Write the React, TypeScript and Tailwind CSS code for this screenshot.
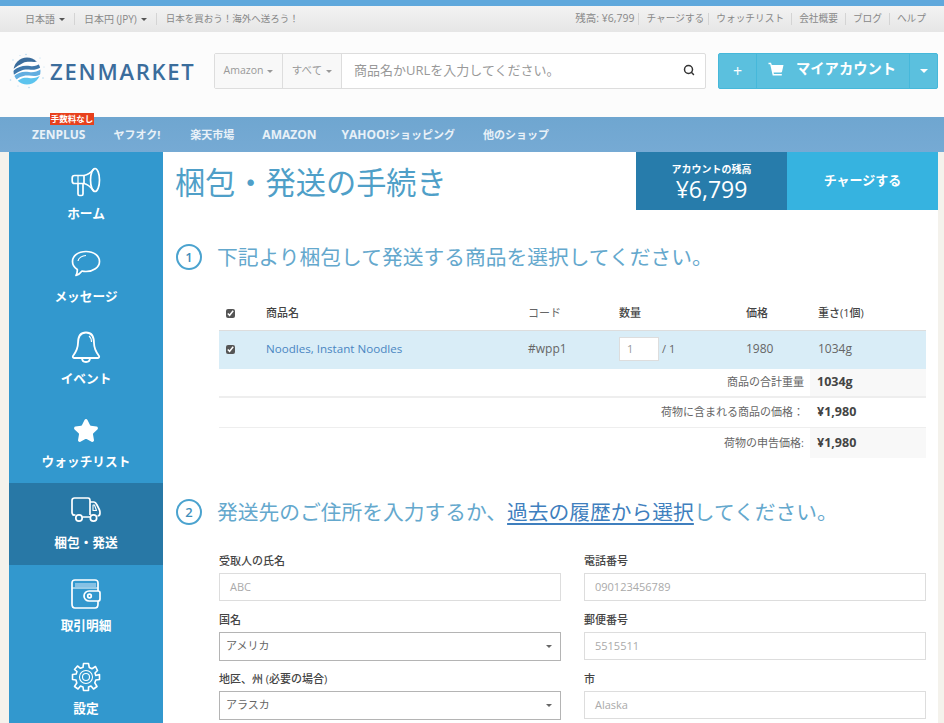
import React from 'react';
import { Search, Star } from 'lucide-react';

const FONT = "font-['Open_Sans','Noto_Sans_CJK_JP',sans-serif]";

const Caret = ({ className = '' }: { className?: string }) => (
  <span className={`inline-block w-0 h-0 border-x-[3px] border-x-transparent border-t-[3.5px] border-t-current ${className}`} />
);

const Logo = () => (
  <svg width="36" height="36" viewBox="0 0 36 36" className="shrink-0">
    <defs>
      <clipPath id="globe"><circle cx="18" cy="18" r="13.5" /></clipPath>
    </defs>
    <g clipPath="url(#globe)">
      <rect x="0" y="0" width="36" height="36" fill="#ffffff" />
      <path d="M2 4 H34 V7 C26 11 20 7 14 10 C10 12 7 14 3 17Z" fill="#3b6d9c" />
      <path d="M3 19 C9 13 15 12 21 13 C25 14 29 12 34 9 V13 C28 17 24 17 20 16.5 C14 16 10 18 3 23Z" fill="#3f78ab" />
      <path d="M3 25 C9 19 14 18 20 19 C25 20 29 18 34 15 V20 C28 24 24 23 20 22.5 C14 22 10 24 4 29Z" fill="#62aee0" />
      <path d="M5 31 C11 25 15 24 20 25 C25 26 29 24 34 21 V34 H5Z" fill="#5cc4ee" />
    </g>
    <g fill="#b4d8ef">
      <circle cx="1.5" cy="27" r="0.8" /><circle cx="4" cy="7" r="0.7" /><circle cx="34" cy="25" r="0.8" />
      <circle cx="17" cy="1.5" r="0.8" /><circle cx="20" cy="34.5" r="0.8" /><circle cx="31" cy="5" r="0.6" />
      <circle cx="11" cy="2.5" r="0.5" /><circle cx="9" cy="33" r="0.6" /><circle cx="35" cy="14" r="0.5" />
    </g>
  </svg>
);

const IconHome = () => (
  <svg width="30" height="30" viewBox="0 0 30 30" fill="none" stroke="white" strokeWidth="1.7" strokeLinejoin="round">
    <path d="M13 8.5 H3.5 C2 8.5 1.2 9.5 1.2 11 V14 C1.2 15.5 2 16.5 3.5 16.5 H13" />
    <path d="M13 8.5 C17 8 20.5 5 23 2 M13 16.5 C17 17 20.5 21 23 24" />
    <ellipse cx="24" cy="13" rx="4.5" ry="11.5" />
    <path d="M13 8.5 V17" />
    <path d="M7 16.5 V27 C7 28 7.7 28.5 8.5 28.5 H10.5 C11.5 28.5 12 28 12 27 V16.5" />
    <path d="M7 8.5 V16.5" strokeWidth="1.2" />
  </svg>
);

const IconMessage = () => (
  <svg width="30" height="28" viewBox="0 0 30 28" fill="none" stroke="white" strokeWidth="1.7" strokeLinejoin="round">
    <path d="M15 1.5 C23 1.5 28.5 6 28.5 11.5 C28.5 17.5 22 21.5 15 21.5 C13.5 21.5 12 21.3 11 21 C9.5 23 7.5 25 5 25.5 C6 23.5 6.5 21.5 6.3 19.5 C3 17.5 1.5 14.7 1.5 11.5 C1.5 6 7 1.5 15 1.5Z" />
    <path d="M7 11 C7.5 8 11 5.5 15 5.5" strokeWidth="1.2" />
  </svg>
);

const IconBell = () => (
  <svg width="30" height="32" viewBox="0 0 30 32" fill="none" stroke="white" strokeWidth="1.8" strokeLinejoin="round">
    <path d="M15 1.5 C9 1.5 7 6.5 7 12 C7 18 5 21 2 25 C1.5 26 2 27 3 27 H27 C28 27 28.5 26 28 25 C25 21 23 18 23 12 C23 6.5 21 1.5 15 1.5Z" />
    <path d="M11 27 C11 30 13 31 15 31 C17 31 19 30 19 27" />
    <path d="M18 5 C20 6.5 20.5 9 20.5 11" strokeWidth="1.1" />
  </svg>
);

const IconTruck = () => (
  <svg width="30" height="26" viewBox="0 0 30 26" fill="none" stroke="white" strokeWidth="1.7" strokeLinejoin="round">
    <path d="M3.5 18 C2 18 1 17 1 15.5 V3.5 C1 2 2 1 3.5 1 H17 C18.5 1 19 2 19 3.5 V18" />
    <path d="M19 5 H23 C24 5 25 6 26 8 L28.5 13 C29 14 29 15 29 16 C29 18 28 19 26.5 19" />
    <path d="M22 8 H23.5 L25.5 13.5 H22Z" strokeWidth="1.1" />
    <circle cx="8" cy="21" r="3.2" />
    <circle cx="22.5" cy="21" r="3.2" />
    <path d="M1.5 18 H4.5 M11.5 20 H19" />
  </svg>
);

const IconWallet = () => (
  <svg width="30" height="30" viewBox="0 0 30 30" fill="none" stroke="white" strokeWidth="1.7" strokeLinejoin="round">
    <path d="M27 12 V4 C27 2 26 1 24 1 H4 C2 1 1 2 1 4 V25 C1 27 2 29 4 29 H24 C26 29 27 27 27 25 V22" />
    <rect x="4" y="4" width="21" height="4" fill="#a9d3ee" stroke="none" opacity="0.7" />
    <path d="M1 9 H27" strokeWidth="1" />
    <path d="M18 12 H27 C28.5 12 29 13 29 14 V20 C29 21 28.5 22 27 22 H18 C15.5 22 13 20 13 17 C13 14 15.5 12 18 12Z" />
    <circle cx="18.5" cy="17" r="1.8" />
  </svg>
);

const IconGear = () => (
  <svg width="30" height="30" viewBox="0 0 30 30" fill="none" stroke="white" strokeWidth="1.6" strokeLinejoin="round">
    <path d="M12.5 1.5 H17.5 L18.3 5.5 L21 6.7 L24.5 4.5 L26.5 8.5 L24 11 L24.8 13.5 L28.5 12.5 V17.5 L24.8 18 L23.8 20.8 L26 24.5 L22.5 27 L20 24 L17.5 25 L17.5 28.5 H12.5 L12 25 L9.5 24 L7 27 L3.5 24.5 L5.8 21 L5 18 L1.5 17.5 V12.5 L5.2 12 L6 9.5 L3.5 7.5 L6.5 4 L9.5 6.3 L12 5.3Z" />
    <circle cx="15" cy="15" r="6.5" strokeWidth="1.1" />
    <circle cx="15" cy="15" r="3.5" strokeWidth="1.1" />
  </svg>
);

const IconCart = () => (
  <svg width="16" height="16" viewBox="0 0 16 16" fill="white">
    <path d="M0.5 0.8 H3 L3.8 3 H15.5 L14 9.8 C13.9 10.3 13.5 10.6 13 10.6 H5.6 L5.9 12 H13.8 V13.4 H4.7 L2.2 2.2 H0.5Z" />
  </svg>
);

const sideItems = [
  { label: 'ホーム', icon: <IconHome />, pos: '' },
  { label: 'メッセージ', icon: <IconMessage />, pos: '' },
  { label: 'イベント', icon: <IconBell />, pos: '' },
  { label: 'ウォッチリスト', icon: <Star size={26} fill="white" stroke="white" />, pos: 'pt-[3px]' },
  { label: '梱包・発送', icon: <IconTruck />, active: true, pos: '-mt-[2px]' },
  { label: '取引明細', icon: <IconWallet />, pos: '-mt-[1px]' },
  { label: '設定', icon: <IconGear />, pos: '-mt-[1px]' },
];

const Sep = () => <span className="h-[12px] w-px bg-[#d4d4d4]" />;

const TopBar = () => (
  <div className="h-[26px] flex items-center justify-between pl-[25px] pr-[18px] bg-gradient-to-b from-[#f3f3f3] to-[#e6e6e6] text-[#888] text-[10px]">
    <div className="flex items-center gap-[9px]">
      <span className="flex items-center gap-[4px]">日本語 <Caret className="text-[#555]" /></span>
      <Sep />
      <span className="flex items-center gap-[4px]">日本円 (JPY) <Caret className="text-[#555]" /></span>
      <Sep />
      <span className="text-[9.5px]">日本を買おう！海外へ送ろう！</span>
    </div>
    <div className="flex items-center gap-[7px] text-[9.7px]">
      <span className="mr-[-3px] text-[10.5px]">残高: ¥6,799</span><Sep />
      <span className="mr-[-3px]">チャージする</span><Sep />
      <span>ウォッチリスト</span><Sep />
      <span>会社概要</span><Sep />
      <span>ブログ</span><Sep />
      <span>ヘルプ</span>
    </div>
  </div>
);

const Header = () => (
  <div className="h-[85px] bg-[#fcfcfc] flex items-start pt-[21px] pl-[9px] pr-[6px]">
    <div className="flex items-center w-[205px] h-[36px] gap-[5px]">
      <Logo />
      <span className="text-[#3b6d9c] text-[22px] font-semibold tracking-[1.75px] leading-none font-['Open_Sans',sans-serif]">ZENMARKET</span>
    </div>
    <div className="flex h-[36px] w-[492px] border border-[#ddd] rounded-[2px] bg-white">
      <div className="w-[68px] flex items-center justify-center gap-[4px] bg-[#f8f8f8] border-r border-[#ddd] text-[#999] text-[10.5px]">Amazon <Caret /></div>
      <div className="w-[59px] flex items-center justify-center gap-[4px] bg-[#f8f8f8] border-r border-[#ddd] text-[#999] text-[10.5px]">すべて <Caret /></div>
      <div className="flex-1 flex items-center justify-between pl-[12px] pr-[10px] text-[#999] text-[13px]">
        <span>商品名かURLを入力してください。</span>
        <Search size={12} strokeWidth={3} className="text-[#333] -mt-[2px]" />
      </div>
    </div>
    <div className="ml-[12px] flex h-[36px] w-[220px] rounded-[2px] bg-[#5bc0de] text-white border border-[#46b8da]">
      <div className="w-[38px] flex items-center justify-center border-r border-[#46b8da] text-[16px]">+</div>
      <div className="flex-1 flex items-center pl-[11px] gap-[12px] font-bold text-[14.3px]">
        <span className="-mt-[3px]"><IconCart /></span>
        <span className="-mt-[4px] whitespace-nowrap">マイアカウント</span>
      </div>
      <div className="w-[28px] flex items-center justify-center border-l border-[#46b8da]"><Caret className="border-x-[4px] border-t-[4px]" /></div>
    </div>
  </div>
);

const Nav = () => (
  <div className="h-[35px] pt-[1px] bg-gradient-to-b from-[#6fa6d0] to-[#76aad4] flex items-center pl-[32px] gap-[28px] text-[#e8f1f8] text-[11px] font-bold">
    <span className="relative text-[12px]">
      ZENPLUS
      <span className="absolute -top-[13px] left-[18px] w-[44px] h-[12px] bg-[#e8401c] text-white text-[8.5px] leading-[12px] text-center whitespace-nowrap">手数料なし</span>
    </span>
    <span>ヤフオク!</span>
    <span className="ml-[2px]">楽天市場</span>
    <span className="text-[12px]">AMAZON</span>
    <span className="-ml-[3px]"><span className="text-[12px]">YAHOO!</span>ショッピング</span>
    <span>他のショップ</span>
  </div>
);

const Sidebar = () => (
  <div className="w-[154px] shrink-0 bg-[#3298ce] text-white">
    {sideItems.map((it) => (
      <div key={it.label} className={`h-[82.7px] flex flex-col items-center ${it.active ? 'bg-[#2878a6]' : ''}`}>
        <div className={`h-[59px] shrink-0 flex items-center justify-center ${it.pos}`}>{it.icon}</div>
        <div className="-mt-[6px] text-[12.7px] font-bold leading-[16px] whitespace-nowrap">{it.label}</div>
      </div>
    ))}
  </div>
);

const StepHead = ({ n, children }: { n: number; children: React.ReactNode }) => (
  <div className="flex items-center gap-[15px] text-[#64a8cd] text-[20.75px] leading-[28px]">
    <span className="w-[26px] h-[26px] rounded-full border-2 border-[#4ba3cf] flex items-center justify-center text-[13px] text-[#3f8fbc] font-semibold">{n}</span>
    <span>{children}</span>
  </div>
);

const Box = ({ value, select }: { value: string; select?: boolean }) => (
  <div className={`flex items-center justify-between bg-white text-[11px] ${select ? 'h-[29px] -mb-[1px] border border-[#b4b4b4] pl-[6px] pr-[8px] text-[#666]' : 'h-[28px] border border-[#ddd] pl-[10px] text-[#aaa]'}`}>
    <span>{value}</span>
    {select && <Caret className="text-[#666]" />}
  </div>
);

const Field = ({ label, value, select }: { label: string; value: string; select?: boolean }) => (
  <div>
    <div className="text-[11px] font-medium text-[#444] leading-[14px] mb-[5px]">{label}</div>
    <Box value={value} select={select} />
  </div>
);

const Summary = ({ label, value, shade, thick, h }: { label: string; value: string; shade?: boolean; thick?: boolean; h: string }) => (
  <div className={`flex ${h} ${thick ? 'border-b-2' : 'border-b'} border-[#eee] text-[11px]`}>
    <div className="flex-1 flex items-center justify-end pr-[6px] text-[#666]">{label}</div>
    <div className={`w-[116px] flex items-center pl-[7px] text-[12.5px] font-bold text-[#444] ${shade ? 'bg-[#f8f8f8]' : ''}`}>{value}</div>
  </div>
);

const Main = () => (
  <div className="flex-1 bg-white min-w-0">
    <div className="flex h-[58px] justify-between">
      <h1 className="pl-[12px] pt-[9px] text-[30.2px] font-normal leading-[44px] text-[#4f9fc8] whitespace-nowrap">梱包・発送の手続き</h1>
      <div className="flex text-white">
        <div className="w-[151px] bg-[#277cab] flex flex-col items-center pt-[10px]">
          <span className="text-[10px] font-bold leading-[14px]">アカウントの残高</span>
          <span className="text-[23px] leading-[26px]">¥6,799</span>
        </div>
        <div className="w-[151px] bg-[#36b3e0] flex items-center justify-center text-[13px] font-bold">チャージする</div>
      </div>
    </div>

    <div className="pl-[13px] mt-[33px]">
      <StepHead n={1}>下記より梱包して発送する商品を選択してください。</StepHead>
    </div>

    <div className="ml-[56px] mr-[12px] mt-[29px] text-[11px] text-[#666]">
      <div className="flex items-center h-[30px] pb-[4px] font-medium text-[#444]">
        <div className="w-[47px] pl-[7px]"><input type="checkbox" defaultChecked className="block w-[9px] h-[9px] accent-[#555]" /></div>
        <div className="w-[262px]">商品名</div>
        <div className="w-[91px] font-normal text-[#666]">コード</div>
        <div className="w-[127px]">数量</div>
        <div className="w-[72px]">価格</div>
        <div>重さ(1個)</div>
      </div>
      <div className="flex items-center h-[39px] pb-[2px] bg-[#d9edf7] border-t border-[#ddd]">
        <div className="w-[47px] pl-[7px]"><input type="checkbox" defaultChecked className="block w-[9px] h-[9px] accent-[#555]" /></div>
        <div className="w-[262px] text-[11.6px] text-[#4a86c2]">Noodles, Instant Noodles</div>
        <div className="w-[91px] text-[12px]">#wpp1</div>
        <div className="w-[127px] flex items-center gap-[3px]">
          <span className="w-[40px] h-[24px] bg-white border border-[#ddd] flex items-center pl-[7px] text-[#999]">1</span>
          <span>/ 1</span>
        </div>
        <div className="w-[72px] text-[12px]">1980</div>
        <div className="text-[12px]">1034g</div>
      </div>
      <Summary label="商品の合計重量" value="1034g" shade thick h="h-[29px]" />
      <Summary label="荷物に含まれる商品の価格：" value="¥1,980" h="h-[30px]" />
      <div className="flex h-[30px] text-[11px]">
        <div className="flex-1 flex items-center justify-end pr-[6px] text-[#666]">荷物の申告価格:</div>
        <div className="w-[116px] flex items-center pl-[7px] text-[12.5px] font-bold text-[#444] bg-[#f8f8f8]">¥1,980</div>
      </div>
    </div>

    <div className="pl-[13px] mt-[40px]">
      <StepHead n={2}>
        発送先のご住所を入力するか、<span className="text-[#3f7fbe] underline underline-offset-[3px]">過去の履歴から選択</span>してください。
      </StepHead>
    </div>

    <div className="ml-[56px] mr-[12px] mt-[28px] grid grid-cols-2 gap-x-[23px] gap-y-[12px]">
      <Field label="受取人の氏名" value="ABC" />
      <Field label="電話番号" value="090123456789" />
      <Field label="国名" value="アメリカ" select />
      <Field label="郵便番号" value="5515511" />
      <Field label="地区、州 (必要の場合)" value="アラスカ" select />
      <Field label="市" value="Alaska" />
    </div>
  </div>
);

export default function App() {
  return (
    <div className={`w-[944px] h-[723px] overflow-hidden bg-[#f4f2ec] ${FONT}`}>
      <div className="h-[6px] bg-[#5fa8dc]" />
      <TopBar />
      <Header />
      <Nav />
      <div className="flex pl-[9px] pr-[6px] h-[571px]">
        <Sidebar />
        <Main />
      </div>
    </div>
  );
}
